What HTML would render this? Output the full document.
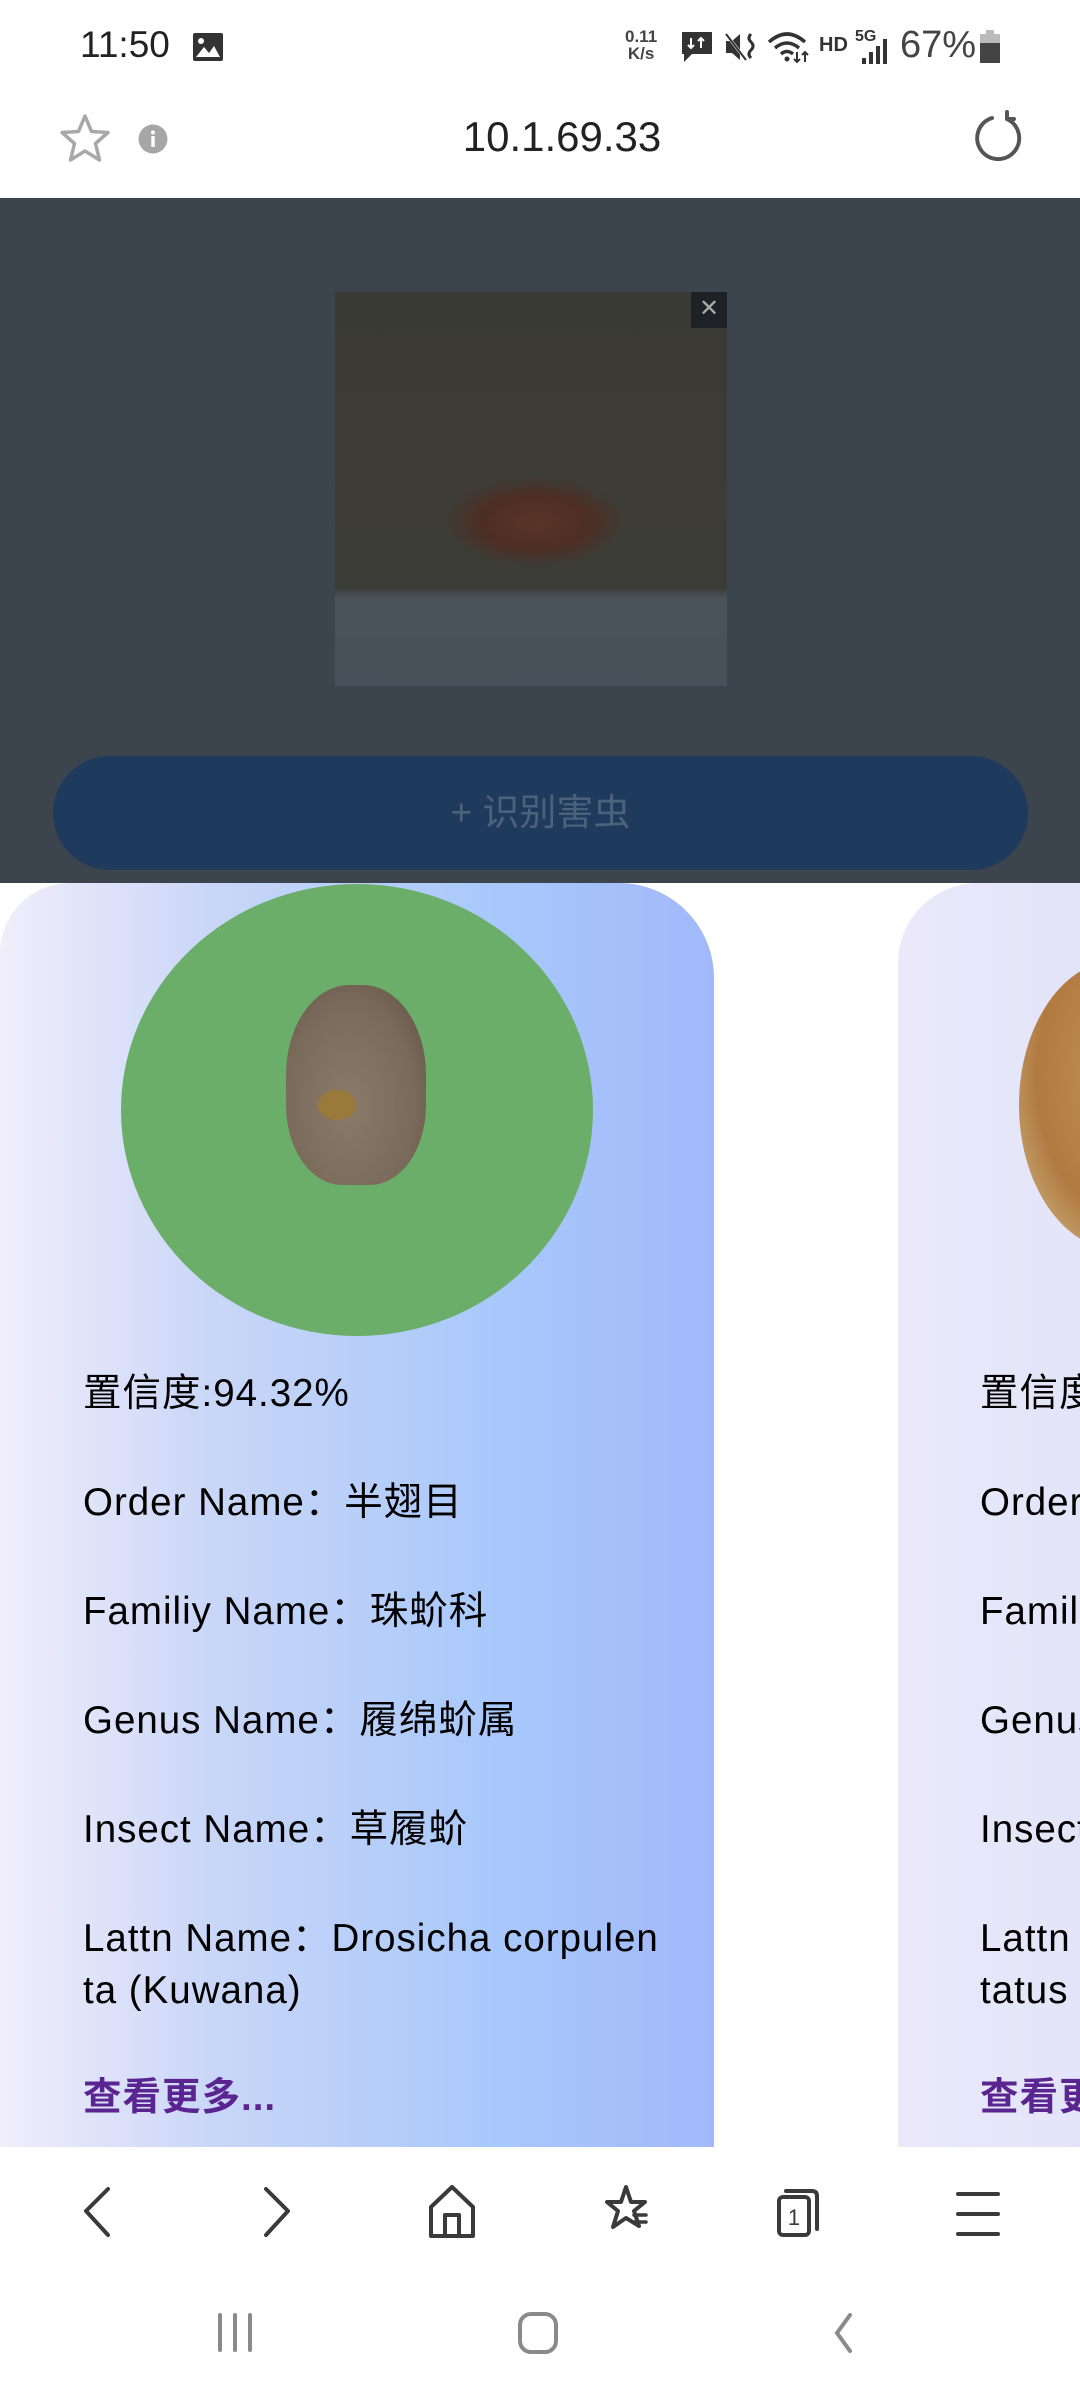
<!DOCTYPE html>
<html><head><meta charset="utf-8">
<style>
*{margin:0;padding:0;box-sizing:border-box}
body{width:1080px;height:2400px;position:relative;overflow:hidden;background:#fff;font-family:"Liberation Sans","Noto Sans CJK SC",sans-serif;color:#000}
.abs{position:absolute}
.status{left:0;top:0;width:1080px;height:90px;background:#fff}
.url{top:90px;left:0;width:1080px;height:108px;background:#fff}
.dark{top:198px;left:0;width:1080px;height:685px;background:#3c454d}
.photo{left:335px;top:292px;width:392px;height:394px;overflow:hidden;
background:radial-gradient(ellipse 90px 45px at 200px 230px,#5a3328 0%,#4d2e24 60%,rgba(0,0,0,0) 100%),linear-gradient(180deg,#3a3a34 0%,#3d3c35 55%,#3b3c37 75%,#4b535a 78%,#47505a 100%)}
.btn{left:53px;top:756px;width:975px;height:114px;border-radius:57px;background:#1e3a5c;color:#4c627a;font-size:37px;text-align:center;line-height:114px}
.card{top:883px;height:1264px;background:linear-gradient(90deg,#f1eefb 0%,#c9d6f7 30%,#a8c8fb 70%,#a2b8fa 100%)}
.c1{left:0;width:714px;border-radius:70px 95px 0 0}
.c2{left:898px;width:300px;border-radius:80px 0 0 0;background:linear-gradient(90deg,#ebe8fa,#dde2f8)}
.circle{left:121px;top:884px;width:472px;height:452px;border-radius:50%;background:#6aae6a}
.bug{left:286px;top:985px;width:140px;height:200px;border-radius:45% 45% 40% 40%;background:radial-gradient(ellipse at 45% 60%,#8a7a68,#7a6a5a 60%,#5e5044)}
.txt{left:83px;font-size:38.5px;letter-spacing:1px;line-height:52px;white-space:nowrap}
.more{color:#5a2590;font-weight:bold}
.bnav{left:0;top:2147px;width:1080px;height:253px;background:#fff}
</style></head><body>
<div class="abs status">
  <div class="abs" style="left:80px;top:24px;font-size:37px;color:#222">11:50</div>
  <svg class="abs" style="left:192px;top:32px" width="32" height="30" viewBox="0 0 32 30"><rect x="1" y="1" width="30" height="28" rx="2" fill="#333"/><circle cx="9" cy="9" r="3" fill="#fff"/><path d="M4 25 L12 15 L17 21 L22 14 L28 25Z" fill="#fff"/></svg>
  <div class="abs" style="left:625px;top:28px;font-size:17px;font-weight:bold;color:#444;line-height:17px;text-align:center">0.11<br>K/s</div>
  <svg class="abs" style="left:680px;top:30px" width="34" height="34" viewBox="0 0 34 34"><path d="M2 2H32V24H12L4 32V24H2Z" fill="#333"/><path d="M11 8V18M8 15l3 3 3-3M21 18V8M18 11l3-3 3 3" stroke="#fff" stroke-width="2" fill="none"/></svg>
  <svg class="abs" style="left:724px;top:30px" width="34" height="34" viewBox="0 0 34 34"><path d="M2 11H8L16 4V30L8 23H2Z" fill="#333"/><path d="M2 4L22 30" stroke="#fff" stroke-width="3"/><path d="M2 4L22 30" stroke="#333" stroke-width="2"/><path d="M27 4q-4 4 0 8t0 8 0 8" stroke="#333" stroke-width="3" fill="none"/></svg>
  <svg class="abs" style="left:767px;top:30px" width="44" height="34" viewBox="0 0 44 34"><path d="M2 12Q20-4 38 12M8 18Q20 8 32 18M14 24Q20 19 26 24" stroke="#333" stroke-width="3.5" fill="none"/><circle cx="20" cy="29" r="2.5" fill="#333"/><path d="M30 22v10M27 29l3 3 3-3M38 32V22M35 25l3-3 3 3" stroke="#333" stroke-width="2" fill="none"/></svg>
  <div class="abs" style="left:819px;top:34px;font-size:20px;font-weight:bold;color:#333">HD</div>
  <div class="abs" style="left:855px;top:28px;font-size:16px;font-weight:bold;color:#333">5G</div>
  <svg class="abs" style="left:860px;top:36px" width="32" height="28" viewBox="0 0 32 28"><rect x="2" y="22" width="4" height="6" fill="#333"/><rect x="9" y="16" width="4" height="12" fill="#333"/><rect x="16" y="10" width="4" height="18" fill="#333"/><rect x="23" y="3" width="4" height="25" fill="#333"/></svg>
  <div class="abs" style="left:900px;top:24px;font-size:38px;color:#444">67%</div>
  <svg class="abs" style="left:979px;top:30px" width="22" height="34" viewBox="0 0 22 34"><rect x="7" y="0" width="8" height="4" fill="#bbb"/><rect x="1" y="4" width="20" height="9" fill="#bbb"/><rect x="1" y="13" width="20" height="20" fill="#444"/></svg>
</div>
<div class="abs url">
  <svg class="abs" style="left:58px;top:22px" width="54" height="54" viewBox="0 0 54 54"><path d="M27 4L33.5 19.5L50 20.5L37.5 31.5L41.5 48L27 39L12.5 48L16.5 31.5L4 20.5L20.5 19.5Z" stroke="#a8a8a8" stroke-width="3.5" fill="none" stroke-linejoin="round"/></svg>
  <svg class="abs" style="left:138px;top:34px" width="30" height="30" viewBox="0 0 30 30"><circle cx="15" cy="15" r="14.5" fill="#a6a6a6"/><circle cx="15" cy="8.5" r="2" fill="#fff"/><rect x="13.3" y="12" width="3.4" height="11" fill="#fff"/></svg>
  <div class="abs" style="left:0;width:1124px;text-align:center;top:23px;font-size:42px;color:#222">10.1.69.33</div>
  <svg class="abs" style="left:970px;top:20px" width="56" height="56" viewBox="0 0 56 56"><path d="M22 8A21 21 0 1 0 37 9" stroke="#555" stroke-width="4" fill="none" stroke-linecap="round"/><path d="M37 9L37 2M37 9L44 9" stroke="#555" stroke-width="4" fill="none" stroke-linecap="round"/></svg>
</div>
<div class="abs dark"></div>
<div class="abs photo">
  <div class="abs" style="right:0;top:0;width:36px;height:36px;background:#1e2226;color:#aaa;font-size:24px;text-align:center;line-height:34px">✕</div>
</div>
<div class="abs btn">+ 识别害虫</div>

<div class="abs card c1"></div>
<div class="abs card c2"></div>
<div class="abs" style="left:1019px;top:960px;width:200px;height:290px;border-radius:50%;background:radial-gradient(ellipse at 60% 40%,#c89a5c,#b07a40 60%,#d8c49a)"></div>
<div class="abs circle"></div>
<div class="abs bug"></div>
<div class="abs" style="left:318px;top:1090px;width:38px;height:30px;border-radius:50%;background:#9a7a3a"></div>

<div class="abs txt" style="top:1368px">置信度:94.32%</div>
<div class="abs txt" style="top:1477px">Order Name：半翅目</div>
<div class="abs txt" style="top:1586px">Familiy Name：珠蚧科</div>
<div class="abs txt" style="top:1695px">Genus Name：履绵蚧属</div>
<div class="abs txt" style="top:1804px">Insect Name：草履蚧</div>
<div class="abs txt" style="top:1913px">Lattn Name：Drosicha corpulen<br>ta (Kuwana)</div>
<div class="abs txt more" style="top:2072px">查看更多...</div>

<div class="abs txt" style="left:980px;top:1368px">置信度</div>
<div class="abs txt" style="left:980px;top:1477px">Order</div>
<div class="abs txt" style="left:980px;top:1586px">Famil</div>
<div class="abs txt" style="left:980px;top:1695px">Genus</div>
<div class="abs txt" style="left:980px;top:1804px">Insect</div>
<div class="abs txt" style="left:980px;top:1913px">Lattn<br>tatus</div>
<div class="abs txt more" style="left:980px;top:2072px">查看更</div>

<div class="abs bnav">
  <svg class="abs" style="left:0;top:0" width="1080" height="253" viewBox="0 0 1080 253">
    <g stroke="#3a3a3a" stroke-width="4" fill="none" stroke-linecap="round" stroke-linejoin="round">
      <path d="M108 42L86 64L108 88"/>
      <path d="M266 42L288 64L266 88"/>
      <path d="M431 89V60L452 40L473 60V89Z M445 89V68H459V89"/>
      <path d="M626 40L631 55L645 55L634 64L639 79L626 71L613 80L618 64L607 55L621 55Z"/>
      <path d="M634 68H646M634 75H646" stroke-width="3.5"/>
      <rect x="779" y="50" width="30" height="38" rx="4"/>
      <path d="M786 44H812Q817 44 817 49V82"/>
      <path d="M958 47H998M958 67H998M958 87H998"/>
    </g>
    <text x="794" y="78" font-size="22" font-family="Liberation Sans" fill="#3a3a3a" text-anchor="middle">1</text>
    <g stroke="#8a8a8a" stroke-width="4" fill="none" stroke-linecap="round">
      <path d="M220 168V203M235 168V203M250 168V203"/>
      <rect x="520" y="167" width="36" height="38" rx="11"/>
      <path d="M850 168L837 186L850 204"/>
    </g>
  </svg>
</div>
</body></html>
